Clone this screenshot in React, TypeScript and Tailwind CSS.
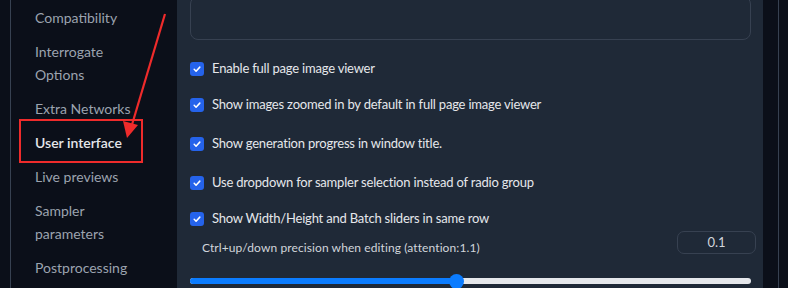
import React from "react";

const Check = () => (
  <span className="flex h-[14px] w-[14px] shrink-0 items-center justify-center rounded-[3px] bg-[#2563eb]">
    <svg width="10" height="10" viewBox="0 0 16 16" fill="none">
      <path d="M3.5 8.5l3 3 6-6.5" stroke="white" strokeWidth="2.4" strokeLinecap="round" strokeLinejoin="round" />
    </svg>
  </span>
);

const Row = ({ text }: { text: string }) => (
  <div className="flex h-[36px] items-center gap-[8px] pl-[13px]">
    <Check />
    <span className="text-[13px] tracking-[-0.2px] text-[#e5e7eb]">{text}</span>
  </div>
);

export default function App() {
  const nav = [
    { t: ["Compatibility"] },
    { t: ["Interrogate", "Options"] },
    { t: ["Extra Networks"] },
    { t: ["User interface"], active: true },
    { t: ["Live previews"] },
    { t: ["Sampler", "parameters"] },
    { t: ["Postprocessing"] },
  ];
  return (
    <div
      className="relative flex h-[288px] w-[788px] overflow-hidden bg-[#0b0f19]"
      style={{ fontFamily: "Lato, 'Noto Sans', sans-serif" }}
    >
      <div className="w-[10px] shrink-0" />
      <div className="w-[1px] shrink-0 bg-[#374151]" />
      <div className="flex w-[166px] shrink-0 flex-col pl-[24px] pt-0">
        {nav.map((n, i) => (
          <div
            key={i}
            className={`flex flex-col py-[5.5px] text-[14px] leading-[23px] ${
              n.active ? "font-semibold text-[#e5e7eb]" : "text-[#9ca3af]"
            }`}
          >
            {n.t.map((l) => (
              <span key={l}>{l}</span>
            ))}
          </div>
        ))}
      </div>
      <div className="flex w-[586px] shrink-0 flex-col bg-[#1f2937] pr-[12px]">
        <div className="ml-[13px] mt-[-4px] h-[44px] rounded-[8px] border border-[#374151]" />
        <div className="mt-[11px] flex flex-col">
          <Row text="Enable full page image viewer" />
          <Row text="Show images zoomed in by default in full page image viewer" />
          <div className="h-[3px]" />
          <Row text="Show generation progress in window title." />
          <div className="h-[3px]" />
          <Row text="Use dropdown for sampler selection instead of radio group" />
          <Row text="Show Width/Height and Batch sliders in same row" />
        </div>
        <div className="mt-[-6px] flex items-start justify-between pl-[25px]">
          <span className="mt-[9px] text-[12px] leading-[16px] tracking-[0.1px] text-[#d1d5db]">
            Ctrl+up/down precision when editing (attention:1.1)
          </span>
          <div className="mr-[-5px] flex h-[23px] w-[79px] items-center justify-center rounded-[7px] border border-[#374151] text-[13px] text-[#d1d5db]">
            0.1
          </div>
        </div>
        <div className="relative ml-[13px] mt-[22px] h-[6px] rounded-full bg-[#e5e7eb]">
          <div className="absolute left-0 top-0 h-[6px] w-[267px] rounded-full bg-[#0b7cff]" />
          <div className="absolute left-[259px] top-[-4px] h-[15px] w-[15px] rounded-full bg-[#0b7cff]" />
        </div>
      </div>
      <div className="w-[15px] shrink-0" />
      <div className="w-[1px] shrink-0 bg-[#374151]" />
      <svg className="pointer-events-none absolute left-0 top-0" width="788" height="288">
        <rect x="20" y="120" width="122" height="42" fill="none" stroke="#ef2b2b" strokeWidth="2" />
        <line x1="165" y1="14" x2="131" y2="128" stroke="#ef2b2b" strokeWidth="2.2" />
        <polygon points="127,138 123,121 138,125" fill="#ef2b2b" />
      </svg>
    </div>
  );
}
